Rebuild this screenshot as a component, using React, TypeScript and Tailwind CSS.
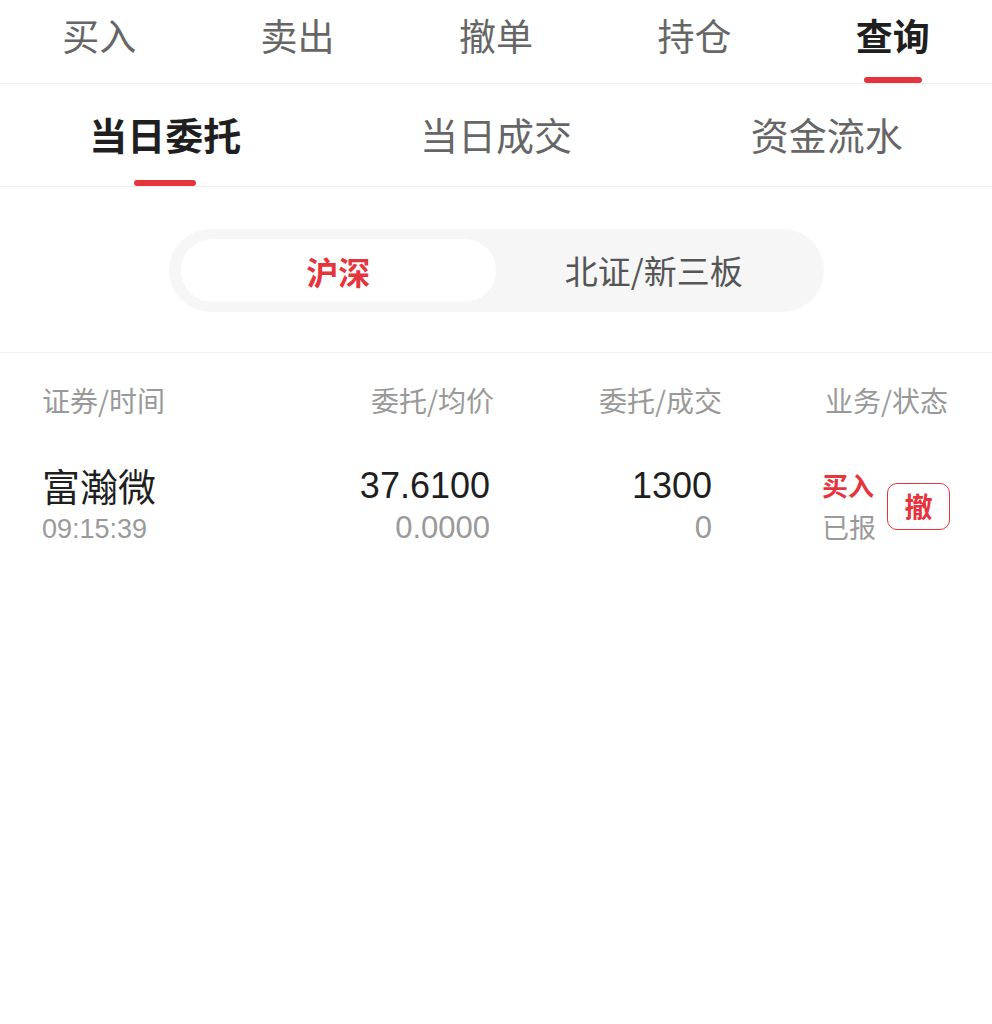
import React from "react";

const font = { fontFamily: '"Noto Sans CJK SC", "Noto Sans", sans-serif' };
const num = { fontFamily: '"Liberation Sans", "Noto Sans CJK SC", sans-serif' };

const topTabs = ["买入", "卖出", "撤单", "持仓", "查询"];
const subTabs = ["当日委托", "当日成交", "资金流水"];

export default function App() {
  return (
    <div className="w-[992px] min-h-[1024px] bg-white text-[#222]" style={font}>
      {/* top nav */}
      <div className="flex border-b border-[#eeeeee]">
        {topTabs.map((t, i) => {
          const active = i === 4;
          return (
            <div key={t} className="flex-1 flex flex-col items-center pt-[15px]">
              <div
                className={
                  "text-[37px] leading-[40px] " +
                  (active ? "font-bold text-[#1f1f1f]" : "text-[#666666]")
                }
              >
                {t}
              </div>
              <div
                className={
                  "mt-[22px] h-[6px] w-[58px] rounded-full " +
                  (active ? "bg-[#e5343c]" : "bg-transparent")
                }
              />
            </div>
          );
        })}
      </div>

      {/* sub tabs */}
      <div className="flex border-b border-[#eeeeee]">
        {subTabs.map((t, i) => {
          const active = i === 0;
          return (
            <div key={t} className="flex-1 flex flex-col items-center pt-[29px]">
              <div
                className={
                  "text-[38px] leading-[42px] " +
                  (active ? "font-bold text-[#1f1f1f]" : "text-[#666666]")
                }
              >
                {t}
              </div>
              <div
                className={
                  "mt-[25px] h-[6px] w-[62px] rounded-full " +
                  (active ? "bg-[#e5343c]" : "bg-transparent")
                }
              />
            </div>
          );
        })}
      </div>

      {/* market segment */}
      <div className="flex justify-center pt-[42px] pb-[40px] border-b border-[#eeeeee]">
        <div className="flex w-[655px] h-[83px] rounded-full bg-[#f6f6f6] px-[12px] py-[10px]">
          <div className="flex-1 flex items-center justify-center rounded-full bg-white text-[32px] font-bold text-[#e5343c]">
            沪深
          </div>
          <div className="flex-1 flex items-center justify-center text-[33px] text-[#555555]">
            北证/新三板
          </div>
        </div>
      </div>

      {/* list header */}
      <div className="flex px-[42px] pt-[28px] text-[28px] leading-[38px] text-[#999999]">
        <div className="w-[258px]">证券/时间</div>
        <div className="w-[194px] text-right">委托/均价</div>
        <div className="w-[228px] text-right">委托/成交</div>
        <div className="flex-1 text-right pr-[2px]">业务/状态</div>
      </div>

      {/* row */}
      <div className="flex items-center px-[42px] pt-[44px]">
        <div className="w-[258px] flex flex-col">
          <div className="text-[38px] leading-[44px] text-[#1f1f1f]">富瀚微</div>
          <div className="mt-[2px] text-[27px] leading-[40px] text-[#9a9a9a]" style={num}>
            09:15:39
          </div>
        </div>
        <div className="w-[190px] flex flex-col items-end" style={num}>
          <div className="text-[36px] leading-[44px] font-medium text-[#1f1f1f]">37.6100</div>
          <div className="text-[31px] leading-[40px] text-[#9a9a9a]">0.0000</div>
        </div>
        <div className="w-[222px] flex flex-col items-end" style={num}>
          <div className="text-[36px] leading-[44px] font-medium text-[#1f1f1f]">1300</div>
          <div className="text-[31px] leading-[40px] text-[#9a9a9a]">0</div>
        </div>
        <div className="flex items-center ml-[110px]">
          <div className="flex flex-col">
            <div className="text-[26px] leading-[42px] font-bold text-[#e5343c]">买入</div>
            <div className="text-[27px] leading-[42px] text-[#9a9a9a]">已报</div>
          </div>
          <div className="ml-[11px] w-[63px] h-[47px] flex items-center justify-center rounded-[10px] border border-[#e5343c] text-[28px] font-bold text-[#e5343c]">
            撤
          </div>
        </div>
      </div>
    </div>
  );
}
